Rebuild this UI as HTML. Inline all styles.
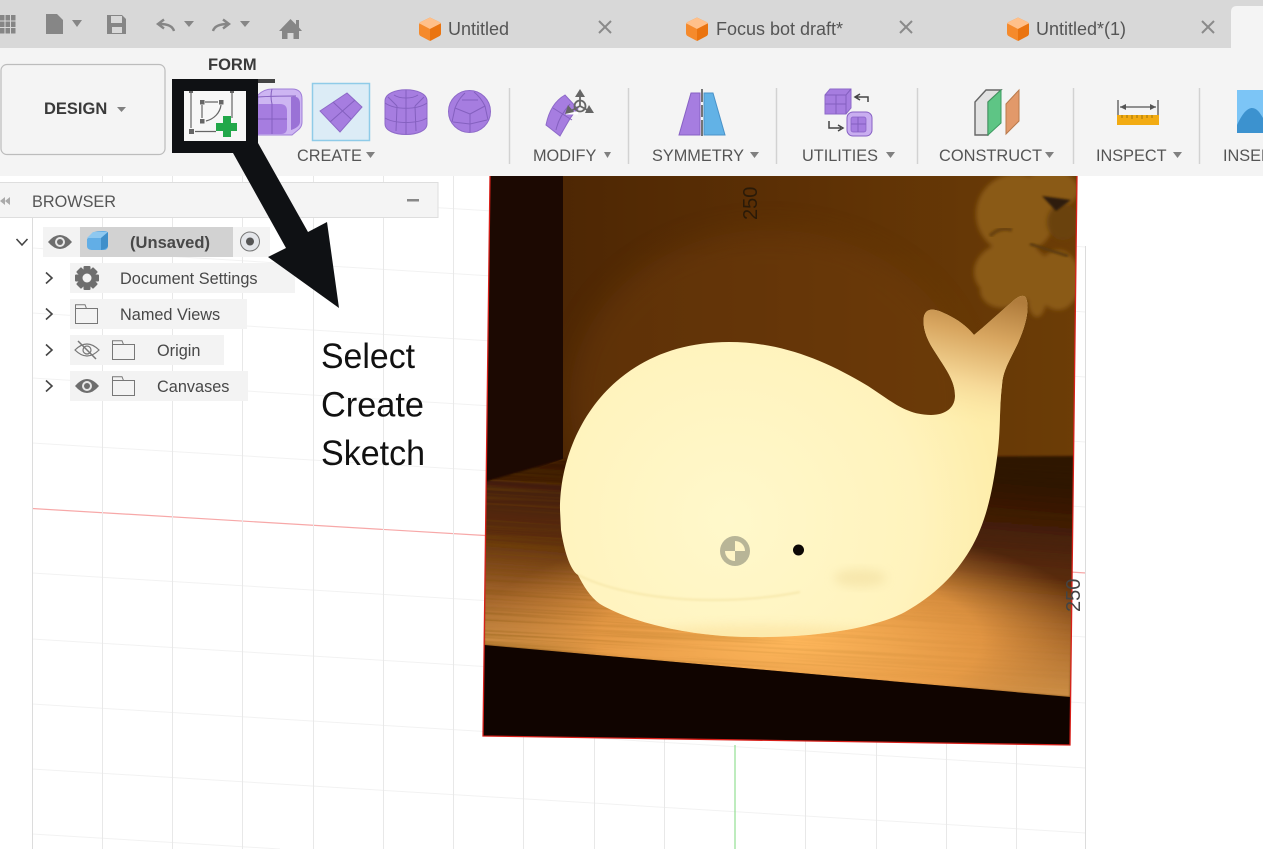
<!DOCTYPE html>
<html><head><meta charset="utf-8"><title>Form workspace</title>
<style>
html,body{margin:0;padding:0;background:#fff;width:1263px;height:849px;overflow:hidden}
svg{display:block}
text{font-family:"Liberation Sans",sans-serif}
.t{font-size:18px;fill:#555}
.l{font-size:16.3px;fill:#555}
.b{font-size:16.3px;fill:#484848}
.ar{fill:#808080}
.sep{stroke:#d2d2d2;stroke-width:1.5}
.pl{fill:#a67de0;stroke:#8d69c8;stroke-width:1}
.pe{fill:none;stroke:#8460bf;stroke-width:1}
.ic{fill:#868686}
</style></head><body>
<svg width="1263" height="849" viewBox="0 0 1263 849" xmlns="http://www.w3.org/2000/svg">
<defs>
<symbol id="cube" viewBox="0 0 22 24">
<path d="M11 0.500 L20.500 5 Q22 6 22 8 V16 Q22 18 20.500 19 L12 23.500 Q11 24 10 23.500 L1.500 19 Q0 18 0 16 V8 Q0 6 1.500 5 Z" fill="#f58a2c"/>
<path d="M11 0.500 L20.500 5 Q21.500 5.600 21.500 6.500 L11 12 L0.500 6.500 Q0.500 5.600 1.500 5 Z" fill="#ffc08a"/>
<path d="M11 12 L21.800 6.500 Q22 7 22 8 V16 Q22 18 20.500 19 L12 23.500 Q11.500 23.800 11 23.800 Z" fill="#ea7410"/>
</symbol>
<symbol id="x" viewBox="0 0 14 14"><path d="M1 1 L13 13 M13 1 L1 13" stroke="#8a8a8a" stroke-width="2" fill="none"/></symbol>
<symbol id="folder" viewBox="0 0 23 20"><path d="M.5 19.500 V.7 H10 L11.500 4.500 H22.500 V19.500 Z M.5 4.500 H11.500" fill="none" stroke="#777" stroke-width="1"/></symbol>
<symbol id="eye" viewBox="0 0 24 16"><path d="M0 8 Q12 -6 24 8 Q12 22 0 8 Z" fill="#6e6e6e"/><circle cx="12" cy="8" r="5" fill="#e8e8e8"/><circle cx="12" cy="8" r="3" fill="#6e6e6e"/></symbol>
<clipPath id="ph"><polygon points="490,176 1077,176 1070,745 483,736"/></clipPath>
<clipPath id="wh"><path d="M560 510 C560 430 615 342 729 342 C780 342 825 360 868 386 C890 400 905 415 931 415 C945 415 955 408 955 396 C955 380 945 368 935 352 C927 340 922 328 924 316 C927 306 937 309 950 316 C962 322 970 330 974 335 C985 326 1000 312 1012 302 C1018 296 1024 294 1026 298 C1030 308 1026 325 1018 343 C1010 360 1003 370 1002 385 C999 410 1001 430 997 458 C992 495 985 525 970 550 C955 575 935 595 905 612 C875 628 815 638 752 637 C690 637 630 622 600 604 C590 597 583 585 578 575 C570 570 564 550 561 530 Z"/></clipPath>
<linearGradient id="wall" gradientUnits="userSpaceOnUse" x1="563" y1="0" x2="1077" y2="0"><stop offset="0" stop-color="#4e2704"/><stop offset=".5" stop-color="#5e3105"/><stop offset="1" stop-color="#6c3d06"/></linearGradient>
<linearGradient id="tbl" gradientUnits="userSpaceOnUse" x1="790" y1="462" x2="772" y2="672"><stop offset="0" stop-color="#2e1204"/><stop offset=".45" stop-color="#5a2c0a"/><stop offset=".75" stop-color="#a2642a"/><stop offset="1" stop-color="#cf9148"/></linearGradient>
<radialGradient id="glow" gradientUnits="userSpaceOnUse" cx="790" cy="640" r="320" gradientTransform="translate(0 410) scale(1 .36)"><stop offset="0" stop-color="#ffb85c"/><stop offset=".6" stop-color="#efa048" stop-opacity=".8"/><stop offset="1" stop-color="#d08a3c" stop-opacity="0"/></radialGradient>
<radialGradient id="body" gradientUnits="userSpaceOnUse" cx="730" cy="520" r="270"><stop offset="0" stop-color="#fff8cb"/><stop offset=".7" stop-color="#fff3bd"/><stop offset="1" stop-color="#feedaa"/></radialGradient>
<linearGradient id="tail" gradientUnits="userSpaceOnUse" x1="1000" y1="298" x2="970" y2="430"><stop offset="0" stop-color="#b07c3c"/><stop offset=".3" stop-color="#d8a660"/><stop offset=".65" stop-color="#f5d796"/><stop offset="1" stop-color="#feedaa" stop-opacity="0"/></linearGradient>
<filter id="bl1" x="-10%" y="-10%" width="120%" height="120%"><feGaussianBlur stdDeviation="1"/></filter>
<filter id="bl2" x="-20%" y="-20%" width="140%" height="140%"><feGaussianBlur stdDeviation="2"/></filter>
<filter id="bl5" x="-30%" y="-30%" width="160%" height="160%"><feGaussianBlur stdDeviation="5"/></filter>
<filter id="bl14" x="-30%" y="-30%" width="160%" height="160%"><feGaussianBlur stdDeviation="14"/></filter>
<filter id="wood" x="0" y="0" width="100%" height="100%"><feTurbulence type="fractalNoise" baseFrequency="0.005 0.4" numOctaves="2" seed="4"/><feColorMatrix values="0 0 0 0 .2  0 0 0 0 .08  0 0 0 0 0  1.4 0 0 0 -.58"/></filter>
<linearGradient id="woodfade" gradientUnits="userSpaceOnUse" x1="490" y1="0" x2="1000" y2="0"><stop offset="0" stop-color="#fff"/><stop offset=".3" stop-color="#fff" stop-opacity=".5"/><stop offset="1" stop-color="#fff" stop-opacity=".1"/></linearGradient>
<mask id="wm"><rect x="470" y="440" width="620" height="280" fill="url(#woodfade)"/></mask>
<clipPath id="top"><polygon points="484,482 564,459 1076,456 1070,697 484,645"/></clipPath>
</defs>

<rect width="1263" height="849" fill="#fff"/>

<!-- grid -->
<g stroke="#f2f2f2" stroke-width="1" fill="none">
<path d="M32 183 L1086 247 M32 248 L1086 312 M32 313 L1086 377 M32 378 L1086 442 M32 443 L1086 507 M32 573 L1086 637 M32 639 L1086 703 M32 704 L1086 768 M32 769 L1086 833 M32 834 L280 849"/>
</g>
<path d="M32 508.500 L485 535.500 M1070 572 L1086 573" stroke="#f7a8a8" stroke-width="1.200" fill="none"/>
<g stroke="#e8e8e8" stroke-width="1" fill="none">
<path d="M102.500 176 V849 M172.500 176 V849 M242.500 176 V849 M313.500 176 V849 M383.500 176 V849 M453.500 176 V849 M523.500 176 V849 M594.500 176 V849 M664.500 176 V849 M805.500 176 V849 M876.500 176 V849 M946.500 176 V849 M1016.500 176 V849"/>
</g>
<path d="M32.500 208 V849 M1085.500 246 V849" stroke="#dcdcdc" stroke-width="1"/>
<path d="M735 745 V849" stroke="#7ed87e" stroke-width="1"/>

<!-- photo -->
<g clip-path="url(#ph)">
<rect x="480" y="170" width="600" height="590" fill="url(#wall)"/>
<ellipse cx="770" cy="400" rx="200" ry="170" fill="#74400a" opacity=".4" filter="url(#bl14)"/>
<polygon points="470,170 563,170 563,459 480,488" fill="#1c0902"/>
<g filter="url(#bl2)" fill="#8a5a12">
<ellipse cx="1016" cy="214" rx="40" ry="40"/>
<ellipse cx="1050" cy="190" rx="28" ry="20"/>
<ellipse cx="1012" cy="272" rx="38" ry="30"/>
<ellipse cx="1058" cy="280" rx="22" ry="30"/>
<ellipse cx="1037" cy="300" rx="9" ry="17"/>
<ellipse cx="1002" cy="290" rx="22" ry="18"/>
</g>
<ellipse cx="1063" cy="222" rx="16" ry="18" fill="#6b4210" filter="url(#bl2)"/>
<path d="M1042 196 L1071 200 L1056 211 Z" fill="#2e1c08" filter="url(#bl1)"/>
<path d="M990 236 Q1000 226 1012 230" stroke="#6a420c" stroke-width="4" fill="none" filter="url(#bl1)"/>
<path d="M1030 244 L1068 256" stroke="#5c3a0c" stroke-width="3" filter="url(#bl1)"/>
<polygon points="484,482 564,459 1076,456 1070,697 484,645" fill="url(#tbl)" filter="url(#bl1)"/>
<rect x="440" y="455" width="660" height="250" fill="url(#glow)" clip-path="url(#top)"/>
<g clip-path="url(#top)" mask="url(#wm)"><rect x="470" y="450" width="620" height="260" filter="url(#wood)" transform="rotate(3.200 780 580)" opacity=".6"/></g>
<polygon points="484,645 1070,697 1070,750 480,740" fill="#100400"/>
</g>

<!-- whale -->
<path d="M560 510 C560 430 615 342 729 342 C780 342 825 360 868 386 C890 400 905 415 931 415 C945 415 955 408 955 396 C955 380 945 368 935 352 C927 340 922 328 924 316 C927 306 937 309 950 316 C962 322 970 330 974 335 C985 326 1000 312 1012 302 C1018 296 1024 294 1026 298 C1030 308 1026 325 1018 343 C1010 360 1003 370 1002 385 C999 410 1001 430 997 458 C992 495 985 525 970 550 C955 575 935 595 905 612 C875 628 815 638 752 637 C690 637 630 622 600 604 C590 597 583 585 578 575 C570 570 564 550 561 530 Z" fill="url(#body)"/>
<g clip-path="url(#wh)">
<rect x="905" y="285" width="135" height="150" fill="url(#tail)"/>
<ellipse cx="760" cy="645" rx="170" ry="20" fill="#f9d88a" opacity=".4" filter="url(#bl5)"/>
<path d="M578 575 C610 591 660 600 713 600 C745 600 775 597 800 592" fill="none" stroke="#f5e4a4" stroke-width="1.500" filter="url(#bl1)"/>
<ellipse cx="860" cy="578" rx="26" ry="9" fill="#f2dfa0" opacity=".6" filter="url(#bl5)"/>
</g>

<!-- origin & eye -->
<circle cx="735" cy="551" r="15" fill="#b8b597"/>
<path d="M735 541 A10 10 0 0 1 745 551 H735 Z M735 551 H725 A10 10 0 0 0 735 561 Z" fill="#fff5c6"/>
<circle cx="798.500" cy="550" r="5.500" fill="#0d0805"/>

<!-- photo border -->
<path d="M490 176 L483 736 L1070 745 L1077 176" fill="none" stroke="#d8201a" stroke-width="1.300"/>

<!-- dimension labels -->
<text transform="translate(757 220) rotate(-90)" font-size="20" fill="#2a1a08">250</text>
<text transform="translate(1080 612) rotate(-90)" font-size="20" fill="#444">250</text>

<!-- tab bar -->
<rect width="1263" height="48" fill="#d8d8d8"/>
<!-- toolbar -->
<rect y="48" width="1263" height="128" fill="#f4f4f4"/>
<path d="M1231 48 V12 Q1231 6 1237 6 H1263 V48 Z" fill="#f4f4f4"/>

<!-- left quick icons -->
<g class="ic">
<path d="M0 15 H4.500 V20.500 H0 Z M5.500 15 H10 V20.500 H5.500 Z M11 15 H15.500 V20.500 H11 Z M0 21.500 H4.500 V27 H0 Z M5.500 21.500 H10 V27 H5.500 Z M11 21.500 H15.500 V27 H11 Z M0 28 H4.500 V33.500 H0 Z M5.500 28 H10 V33.500 H5.500 Z M11 28 H15.500 V33.500 H11 Z"/>
<path d="M46 14 H57 L63 20 V34 H46 Z"/>
<path d="M107 15 H122 L126 19 V34 H107 Z M111 16 V23 H122 V16 Z M112 27 V33 H122 V27 Z" fill-rule="evenodd"/>
<path d="M72 20 H82 L77 27 Z M184 21 H194 L189 27 Z M240 21 H250 L245 27 Z"/>
<path d="M279 31 L290.500 19 L296 24.500 V20 H299 V27.500 L302 31 H299 V39 H293.500 V33 H287.500 V39 H282 V31 Z"/>
</g>
<path d="M174 31 Q172 24 160 24 M164 19.500 L158 24 L164 28.500" fill="none" stroke="#868686" stroke-width="2.400"/>
<path d="M213 31 Q215 24 228 24 M223 19.500 L229 24 L223 28.500" fill="none" stroke="#868686" stroke-width="2.400"/>

<!-- tabs -->
<use href="#cube" x="419" y="17" width="22" height="24"/>
<text class="t" x="448" y="35">Untitled</text>
<use href="#x" x="598" y="20" width="14" height="14"/>
<use href="#cube" x="686" y="17" width="22" height="24"/>
<text class="t" x="716" y="35">Focus bot draft*</text>
<use href="#x" x="899" y="20" width="14" height="14"/>
<use href="#cube" x="1007" y="17" width="22" height="24"/>
<text class="t" x="1036" y="35">Untitled*(1)</text>
<use href="#x" x="1201" y="20" width="14" height="14"/>

<!-- design button -->
<rect x="1" y="64.500" width="164" height="90" rx="6" fill="#f4f4f4" stroke="#bcbcbc" stroke-width="1.200"/>
<text x="44" y="114" font-size="16.500" font-weight="bold" fill="#3a3a3a">DESIGN</text>
<path class="ar" d="M117 107 H126 L121.500 112 Z"/>
<text x="208" y="70" font-size="16.500" font-weight="bold" fill="#3a3a3a">FORM</text>
<rect x="191" y="79" width="84" height="4" fill="#444"/>

<!-- form icons -->
<g>
<path d="M258 95 Q264 89 272 89 H292 Q302 89 302 99 V122 Q302 127 298 130 L292 135 H258 Z" fill="#cdb5f2" stroke="#a07fd8"/>
<path d="M258 104 H280 Q287 104 287 111 V128 Q287 134 281 134 H258 Z" fill="#a67de0"/>
<path d="M291 97 Q300 95 300 104 V122 Q300 127 291 130 Z" fill="#9a72d6"/>
<path class="pe" d="M258 119 H287 M272 89 Q270 96 272 104 V134 M258 97 Q272 96 296 96"/>
</g>
<rect x="312.500" y="83.500" width="57" height="57" fill="#dcecf6" stroke="#8fcbe8" stroke-width="1.500"/>
<path class="pl" d="M320 111 L347 93 L362 107 L340 132 Z"/>
<path class="pe" d="M333 102 L351 119 M330 122 L355 100"/>
<g>
<path class="pl" d="M385 101 C385 86 427 86 427 101 V124 C427 138 385 138 385 124 Z"/>
<path class="pe" d="M385 103 C395 110 417 110 427 103 M385 118 C395 124 417 124 427 118 M397 106 L396 131 M415 106 L416 131 M406 108 V134 M388 97 L397 106 M424 97 L415 106 M406 90 V108 M394 95 C400 99 412 99 418 95"/>
</g>
<g>
<circle class="pl" cx="469.500" cy="111.500" r="21"/>
<path class="pe" d="M470 114 L455 108 M470 114 L485 106 M470 114 V132 M455 108 L452 122 M485 106 L488 120 M455 108 C458 100 462 96 465 93 M485 106 C482 100 479 96 474 92 M453 122 L470 124 L487 120 M462 100 L478 100"/>
</g>
<text class="l" x="297" y="161">CREATE</text>
<path class="ar" d="M366 152 H375 L370.500 158 Z"/>

<g class="sep"><path d="M509.500 88 V164 M628.500 88 V164 M776.500 88 V164 M917.500 88 V164 M1073.500 88 V164 M1199.500 88 V164"/></g>

<!-- modify -->
<path class="pl" d="M546 125 C549 110 556 100 565 95 L578 109 C572 114 568 122 560 136 Z"/>
<path class="pe" d="M553 108 L572 120 M556 130 C558 120 563 112 570 104"/>
<path d="M566 113 L578 113" stroke="#fff" stroke-width="3"/>
<circle cx="580" cy="106" r="5.500" fill="none" stroke="#666" stroke-width="1.800"/>
<path d="M580 106 V94 M580 106 L569 112 M580 106 L591 112" stroke="#666" stroke-width="1.800"/>
<path d="M580 89 L585 97 H575 Z M565 114 L568 105 L574 112 Z M594 113 L585 113 L589 105 Z" fill="#666"/>
<text class="l" x="533" y="161">MODIFY</text>
<path class="ar" d="M604 152 H611 L607.500 158 Z"/>

<!-- symmetry -->
<path d="M679 135 L691 93 H700 V135 Z" fill="#a67de0" stroke="#8761c4"/>
<path d="M704 93 H713 L725 135 H704 Z" fill="#62b2e6" stroke="#4a92c8"/>
<path d="M702 89 V102 M702 105 V117 M702 120 V136" stroke="#555" stroke-width="1.600"/>
<text class="l" x="652" y="161">SYMMETRY</text>
<path class="ar" d="M750 152 H759 L754.500 158 Z"/>

<!-- utilities -->
<path class="pl" d="M825 95 L830 89 H851 V108 L846 114 H825 Z"/>
<path class="pe" d="M825 95 H846 L851 89 M846 95 V114 M825 104 H846 M836 95 V114"/>
<path d="M868 102 V97 H856 M860 94 L855 97 L860 100" fill="none" stroke="#444" stroke-width="1.500"/>
<path d="M829 121 V128 H841 M838 125 L843 128 L838 131" fill="none" stroke="#444" stroke-width="1.500"/>
<rect x="847" y="112" width="25" height="24" rx="6" fill="#c9aef0" stroke="#8761c4"/>
<rect x="851" y="117" width="15" height="15" rx="2" fill="#a67de0" stroke="#8761c4" stroke-width=".7"/>
<path class="pe" d="M858 117 V132 M851 124 H866"/>
<text class="l" x="802" y="161">UTILITIES</text>
<path class="ar" d="M886 152 H895 L890.500 158 Z"/>

<!-- construct -->
<path d="M975 102 L986 90 H1001 L988 102 V135 H975 Z" fill="#e2e2e2" stroke="#666" stroke-width="1.400"/>
<path d="M988 102 L1001 90 V123 L988 135 Z" fill="#5ec585" stroke="#3d9a60"/>
<path d="M1006 104 L1019 90 V121 L1006 134 Z" fill="#e2996a" stroke="#b97a4c"/>
<text class="l" x="939" y="161" textLength="103" lengthAdjust="spacingAndGlyphs">CONSTRUCT</text>
<path class="ar" d="M1045 152 H1054 L1049.500 158 Z"/>

<!-- inspect -->
<path d="M1118 100 V115 M1158 100 V115 M1120 107 H1156" stroke="#555" stroke-width="1.300"/>
<path d="M1120 107 L1126 104 V110 Z M1156 107 L1150 104 V110 Z" fill="#555"/>
<rect x="1117" y="115" width="42" height="10" fill="#f2ab12"/>
<path d="M1122 115 V118 M1127 115 V118 M1132 115 V119 M1137 115 V118 M1142 115 V119 M1147 115 V118 M1152 115 V118" stroke="#8a6a10" stroke-width=".8"/>
<text class="l" x="1096" y="161">INSPECT</text>
<path class="ar" d="M1173 152 H1182 L1177.500 158 Z"/>

<!-- insert -->
<rect x="1237" y="90" width="26" height="43" fill="#7cc5f6"/>
<path d="M1237 125 C1243 112 1248 108 1252 108 C1257 108 1260 113 1263 118 V133 H1237 Z" fill="#3c92cf"/>
<text class="l" x="1223" y="161">INSERT</text>

<!-- browser panel -->
<rect x="-1" y="182.500" width="439" height="35" fill="#f4f4f4" stroke="#dedede"/>
<path d="M5 197 L0 201 L5 205 Z M10 197 L5 201 L10 205 Z" fill="#aaa"/>
<text x="32" y="207" font-size="16.500" fill="#555" textLength="84" lengthAdjust="spacingAndGlyphs">BROWSER</text>
<rect x="407" y="199" width="12" height="2.500" fill="#888"/>

<!-- tree rows -->
<rect x="43" y="227" width="227" height="30" fill="#f3f3f3"/>
<rect x="80" y="227" width="153" height="30" fill="#d2d2d2"/>
<rect x="70" y="263" width="225" height="30" fill="#f3f3f3"/>
<rect x="70" y="299" width="177" height="30" fill="#f3f3f3"/>
<rect x="70" y="335" width="154" height="30" fill="#f3f3f3"/>
<rect x="70" y="371" width="178" height="30" fill="#f3f3f3"/>

<g fill="none" stroke="#444" stroke-width="1.600">
<path d="M16.500 239 L22 245 L27.500 239"/>
<path d="M46 272.500 L52 278 L46 283.500"/>
<path d="M46 308.500 L52 314 L46 319.500"/>
<path d="M46 344.500 L52 350 L46 355.500"/>
<path d="M46 380.500 L52 386 L46 391.500"/>
</g>

<use href="#eye" x="48" y="234" width="24" height="16"/>
<path d="M87 239 L94 232 Q97 231 103 231 Q108 231 108 233 V246 Q108 249 105 250 L93 250 Q87 250 87 246 Z" fill="#62aee6"/>
<path d="M87 238 L93 232 H108 L101 238 Z" fill="#8ec8f0"/>
<path d="M101 238 L108 232 V246 Q107 249 101 250 Z" fill="#3f8fca"/>
<text class="b" x="130" y="248" font-weight="bold" font-size="16" textLength="80" lengthAdjust="spacingAndGlyphs">(Unsaved)</text>
<circle cx="250" cy="241.500" r="9.500" fill="#e4e6ea" stroke="#777" stroke-width="1"/>
<circle cx="250" cy="241.500" r="4" fill="#555"/>

<!-- gear -->
<g transform="translate(87 278)">
<g fill="#6e6e6e">
<rect x="-3.500" y="-12" width="7" height="24" rx="1"/>
<rect x="-3.500" y="-12" width="7" height="24" rx="1" transform="rotate(45)"/>
<rect x="-3.500" y="-12" width="7" height="24" rx="1" transform="rotate(90)"/>
<rect x="-3.500" y="-12" width="7" height="24" rx="1" transform="rotate(135)"/>
<circle r="9"/>
</g>
<circle r="4.500" fill="#f3f3f3"/>
</g>
<text class="b" x="120" y="284">Document Settings</text>

<use href="#folder" x="75" y="304" width="23" height="20"/>
<text class="b" x="120" y="320">Named Views</text>

<g fill="none" stroke="#777" stroke-width="1.200">
<path d="M75 350 Q87 338 99 350 Q87 362 75 350 Z"/>
<circle cx="87" cy="350" r="4"/>
<path d="M78 341 L96 359" stroke-width="1.500"/>
</g>
<use href="#folder" x="112" y="340" width="23" height="20"/>
<text class="b" x="157" y="356">Origin</text>

<use href="#eye" x="75" y="378" width="24" height="16"/>
<use href="#folder" x="112" y="376" width="23" height="20"/>
<text class="b" x="157" y="392">Canvases</text>

<!-- annotation arrow & box -->
<path fill-rule="evenodd" d="M172 79 H258 V153 H172 Z M184 91 V141 H246 V91 Z" fill="#0f1114"/>
<rect x="184" y="91" width="62" height="50" fill="#f7f7f7"/>
<polygon points="233,153 258,143 308,232 327,222 339,308 268,257 286,248" fill="#0f1114"/>
<!-- create form icon -->
<g fill="#666">
<rect x="189" y="91" width="4" height="2"/><rect x="230" y="91" width="4" height="2"/>
<rect x="189" y="129" width="5" height="5"/>
<rect x="200" y="100" width="4.500" height="4.500"/><rect x="219" y="100" width="4.500" height="4.500"/><rect x="200" y="119" width="4.500" height="4.500"/>
</g>
<path d="M191 93 V128 M232 93 V118 M195 131.500 H216 M205 102 H218 M202 105 V118 M206 121 C214 119 220 113 221 105" fill="none" stroke="#666" stroke-width="1.200"/>
<path d="M223 116 H231 V123 H237 V131 H231 V137 H223 V131 H216 V123 H223 Z" fill="#22a84a"/>

<!-- annotation -->
<g font-size="35" fill="#111">
<text x="321" y="368" textLength="94" lengthAdjust="spacingAndGlyphs">Select</text>
<text x="321" y="416.500" textLength="103" lengthAdjust="spacingAndGlyphs">Create</text>
<text x="321" y="465" textLength="104" lengthAdjust="spacingAndGlyphs">Sketch</text>
</g>
</svg>
</body></html>
